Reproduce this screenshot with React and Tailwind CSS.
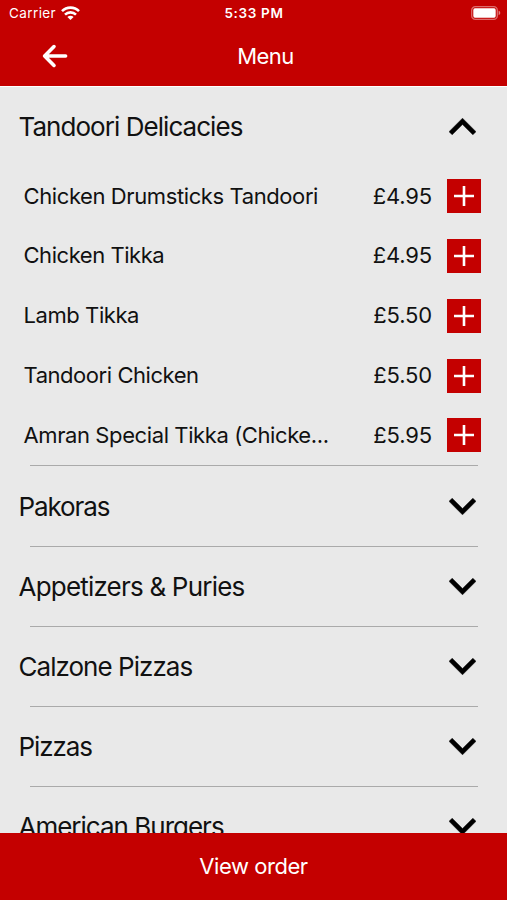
const dishes = [
  { name: 'Chicken Drumsticks Tandoori', price: '£4.95', spacing: 'tracking-[-0.4px]' },
  { name: 'Chicken Tikka', price: '£4.95', spacing: 'tracking-[-0.45px]' },
  { name: 'Lamb Tikka', price: '£5.50', spacing: 'tracking-[-0.42px]' },
  { name: 'Tandoori Chicken', price: '£5.50', spacing: 'tracking-[-0.45px]' },
  { name: 'Amran Special Tikka (Chicke...', price: '£5.95', spacing: 'tracking-[-0.4px]' },
];

const sections = [
  { title: 'Tandoori Delicacies', items: dishes, spacing: 'tracking-[-0.95px]' },
  { title: 'Pakoras', spacing: 'tracking-[-1.1px]' },
  { title: 'Appetizers & Puries', spacing: 'tracking-[-0.8px]' },
  { title: 'Calzone Pizzas', spacing: 'tracking-[-0.97px]' },
  { title: 'Pizzas', spacing: 'tracking-[-1.1px]' },
  { title: 'American Burgers', spacing: 'tracking-[-1px]' },
];

const WifiIcon = () => (
  <svg width="19" height="14" viewBox="0 0 19 14" fill="none" stroke="white" strokeWidth="2.6" className="-mt-px">
    <path d="M1 5.1C5.7 0.4 13.3 0.4 18 5.1" />
    <path d="M4 8.6C7.1 5.6 11.9 5.6 15 8.6" />
    <path d="M9.5 14L6.4 11C8.2 9.4 10.8 9.4 12.6 11Z" fill="white" stroke="none" />
  </svg>
);

const BatteryIcon = () => (
  <svg width="30" height="14" viewBox="0 0 30 14" className="-mt-px">
    <rect x="0.7" y="0.7" width="25.6" height="12.6" rx="3.6" fill="none" stroke="white" strokeOpacity="0.42" strokeWidth="1.3" />
    <rect x="2.3" y="2.3" width="22.4" height="9.4" rx="1.6" fill="white" />
    <path d="M27.6 4.8C29.8 5.4 29.8 8.6 27.6 9.2Z" fill="white" fillOpacity="0.5" />
  </svg>
);

const BackArrow = () => (
  <svg width="26" height="24" viewBox="0 0 26 24" fill="none" stroke="white" strokeWidth="3.6" strokeLinecap="round" strokeLinejoin="round">
    <path d="M12 2.6L2.6 12L12 21.4M2.6 12H23.6" />
  </svg>
);

const Chevron = ({ open }) => (
  <svg width="27" height="17" viewBox="6 8 12 7.41" className={open ? '' : 'rotate-180'}>
    <path d="M7.41 15.41L12 10.83l4.59 4.58L18 14l-6-6-6 6z" fill="black" stroke="black" strokeWidth="0.2" />
  </svg>
);

const AddButton = () => (
  <button className="flex h-[34px] w-[34px] items-center justify-center bg-[#c40000]">
    <svg width="20" height="20" viewBox="0 0 20 20" stroke="white" strokeWidth="2.6">
      <path d="M0 10H20M10 0V20" />
    </svg>
  </button>
);

const DishRow = ({ dish }) => (
  <div className="flex h-[59.85px] items-center pr-[26px] pl-[23.5px]">
    <span className={`flex-1 whitespace-nowrap text-[22px] ${dish.spacing}`}>{dish.name}</span>
    <span className="mr-[15px] text-[22px] tracking-[-0.15px]">{dish.price}</span>
    <AddButton />
  </div>
);

const Section = ({ section, last }) => (
  <section className="shrink-0">
    <div className={`flex items-center justify-between pr-[31px] pl-[18.5px] ${section.items ? 'h-[80.2px] pt-px' : 'h-[79.2px]'}`}>
      <h2 className={`whitespace-nowrap text-[26px] ${section.spacing}`}>{section.title}</h2>
      <Chevron open={Boolean(section.items)} />
    </div>
    {section.items?.map((dish) => <DishRow key={dish.name} dish={dish} />)}
    {!last && <hr className="mr-[29px] ml-[30px] border-t border-[#aaaaaa]" />}
  </section>
);

export default function App() {
  return (
    <div className="flex h-[900px] w-[507px] flex-col overflow-hidden bg-[#e9e9e9] font-['Inter',sans-serif] text-[#111111]">
      <header className="h-[86px] shrink-0 bg-[#c40000] text-white">
        <div className="grid h-[27px] grid-cols-3 items-center pr-[6px] pl-[9px] text-[13.5px]">
          <div className="flex items-center gap-[5px]">
            <span className="tracking-[0.4px]">Carrier</span>
            <WifiIcon />
          </div>
          <span className="pr-[2px] text-center font-semibold tracking-[0.65px]">5:33 PM</span>
          <div className="flex justify-end">
            <BatteryIcon />
          </div>
        </div>
        <div className="grid h-[58px] grid-cols-3 items-center">
          <div className="pl-[42px]">
            <BackArrow />
          </div>
          <h1 className="pl-6 text-center text-[22px] tracking-[-0.6px]">Menu</h1>
        </div>
      </header>

      <main className="flex min-h-0 flex-1 flex-col overflow-hidden shadow-[inset_0_1px_0_#ffffff]">
        {sections.map((section, i) => (
          <Section key={section.title} section={section} last={i === sections.length - 1} />
        ))}
      </main>

      <button className="h-[67px] shrink-0 bg-[#c40000] text-[22px] tracking-[-0.45px] text-white">View order</button>
    </div>
  );
}
